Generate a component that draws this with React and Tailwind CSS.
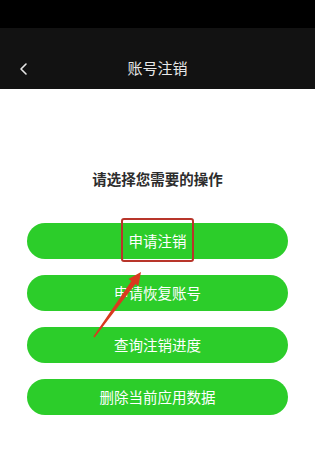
const actions = ["申请注销", "申请恢复账号", "查询注销进度", "删除当前应用数据"];

export default function App() {
  return (
    <div
      className="relative w-[315px] h-[450px] bg-white overflow-hidden"
      style={{ fontFamily: '"Noto Sans CJK SC", "Noto Sans", sans-serif' }}
    >
      {/* status bar */}
      <div className="h-[28px] bg-black" />

      {/* header */}
      <div className="h-[61px] bg-[#121212] flex items-center relative">
        <svg className="absolute left-[18px] top-[33px]" width="12" height="16" viewBox="0 0 12 16">
          <polyline points="8,3 3,8 8,13" fill="none" stroke="#e6e6e6" strokeWidth="1.6" strokeLinecap="round" strokeLinejoin="round" />
        </svg>
        <div className="flex-1 text-center text-[15px] text-[#e8e8e8] pt-[20px]">账号注销</div>
      </div>

      <div className="flex flex-col items-center pt-[80px]">
        <div className="text-[14.5px] font-bold text-[#2d2d2d] leading-[20px]">请选择您需要的操作</div>

        <div className="flex flex-col gap-[16px] mt-[34px] w-[261px]">
          {actions.map((a, i) => (
            <div
              key={a}
              className="relative h-[36px] rounded-full bg-[#2ccd2a] flex items-center justify-center text-[14.5px] text-white"
            >
              {a}
              {i === 0 && (
                <div className="absolute left-[94px] top-[-5px] w-[73px] h-[44px] border-2 border-[#b8352a] rounded-[3px]" />
              )}
            </div>
          ))}
        </div>
      </div>

      {/* arrow pointing at the highlighted button */}
      <svg className="absolute inset-0 pointer-events-none" width="315" height="450" viewBox="0 0 315 450">
        <polygon
          points="93.4,336.5 131.4,281 128.5,279 141,272 138.3,286 135.4,284 94.6,337.5"
          fill="#d9391f"
        />
      </svg>
    </div>
  );
}
